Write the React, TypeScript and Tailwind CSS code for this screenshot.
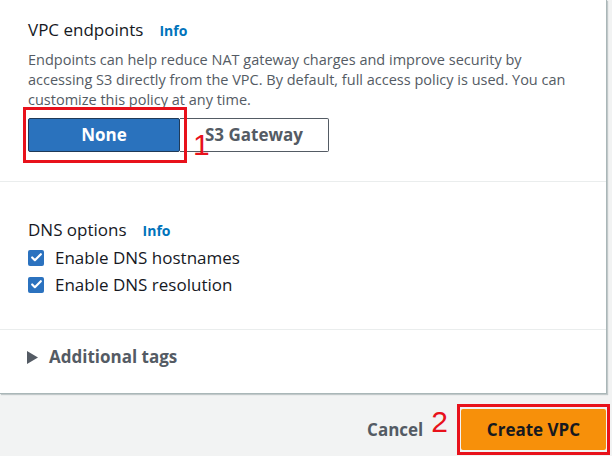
import { Check } from "lucide-react"

const dnsOptions = ["Enable DNS hostnames", "Enable DNS resolution"]

const Info = () => (
  <span className="ml-[16px] text-[14px] font-bold text-[#0073bb]">Info</span>
)

const App = () => {
  return (
    <main className="w-[612px] h-[456px] overflow-hidden bg-[#f2f3f3] font-['Open_Sans',sans-serif]">
      <div className="w-[607px] bg-white border-r border-b border-[#aab7b8] shadow-[1px_1px_1px_rgba(0,28,36,0.2)]">
        {/* VPC endpoints */}
        <section className="px-[28px] pt-[19px] pb-[29px]">
          <div className="flex items-baseline text-[17px] leading-[22px] text-[#16191f]">
            VPC endpoints <Info />
          </div>
          <p className="mt-[8px] text-[14.5px] leading-[20px] text-[#545b64]">
            Endpoints can help reduce NAT gateway charges and improve security by accessing S3 directly from the VPC. By default, full access policy is used. You can customize this policy at any time.
          </p>
          <div className="mt-[8px] flex">
            <div className="relative">
              <button className="w-[152px] h-[34px] bg-[#2a72bd] border border-[#1f3a58] rounded-[2px] text-white text-[17px] font-bold">
                None
              </button>
              <div className="absolute -left-[5px] -top-[11px] -right-[7px] -bottom-[11px] border-[3px] border-[#e8111b]" />
              <span className="absolute left-[165px] top-[12px] text-[30px] leading-[30px] text-[#e8111b] font-['Liberation_Sans',sans-serif]">1</span>
            </div>
            <button className="w-[149px] h-[34px] bg-white border border-[#545b64] border-l-0 rounded-r-[2px] text-left pl-[25px] text-[17px] font-bold text-[#545b64]">
              S3 Gateway
            </button>
          </div>
        </section>

        <div className="h-px bg-[#eaeded]" />

        {/* DNS options */}
        <section className="px-[28px] pt-[37px] pb-[31px]">
          <div className="flex items-baseline text-[17px] leading-[22px] text-[#16191f]">
            DNS options <Info />
          </div>
          <div className="mt-[2px]">
            {dnsOptions.map((label) => (
              <label key={label} className="flex items-center h-[27px] text-[17px] text-[#16191f]">
                <span className="flex items-center justify-center w-[16px] h-[16px] rounded-[2px] bg-[#2b72bf]">
                  <Check className="w-[13px] h-[13px] text-white" strokeWidth={4} />
                </span>
                <span className="ml-[11px]">{label}</span>
              </label>
            ))}
          </div>
        </section>

        <div className="h-px bg-[#eaeded]" />

        {/* Additional tags */}
        <section className="px-[27px] pt-[16px] pb-[25px]">
          <div className="flex items-center h-[22px] text-[17px] font-bold text-[#545b64]">
            <svg width="11" height="13" viewBox="0 0 11 13" className="shrink-0">
              <path d="M0 0 L11 6.5 L0 13 Z" fill="#545b64" />
            </svg>
            <span className="ml-[11px]">Additional tags</span>
          </div>
        </section>
      </div>

      {/* Footer */}
      <div className="flex items-center justify-end pr-[6px] pt-[15px]">
        <span className="text-[17px] font-bold text-[#545b64]">Cancel</span>
        <span className="ml-[8px] mr-[13px] -mt-[16px] text-[30px] leading-[30px] text-[#e8111b] font-['Liberation_Sans',sans-serif]">2</span>
        <div className="relative">
          <button className="w-[145px] h-[41px] bg-[#f7900a] rounded-[2px] text-[17px] font-bold text-[#16191f]">
            Create VPC
          </button>
          <div className="absolute -left-[4px] -top-[5px] -right-[4px] -bottom-[5px] border-[3px] border-[#e8111b]" />
        </div>
      </div>
    </main>
  )
}

export default App
